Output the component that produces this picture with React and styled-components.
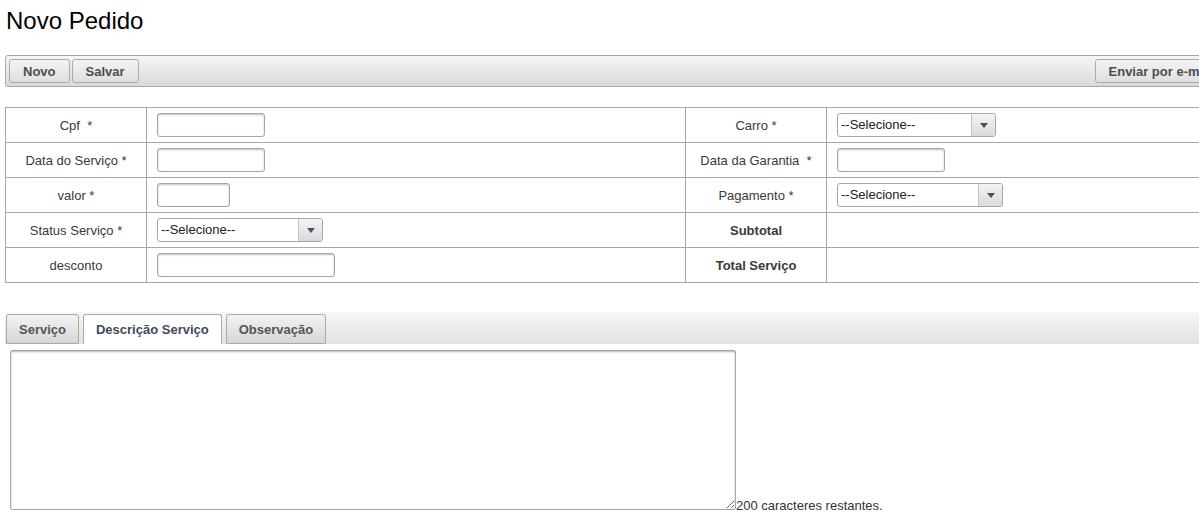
import React from "react";
import styled, { createGlobalStyle } from "styled-components";

const GlobalStyle = createGlobalStyle`
  html, body {
    margin: 0;
    padding: 0;
    overflow: hidden;
    background: #fff;
  }
  body {
    font-family: "Liberation Sans", Arial, sans-serif;
    font-size: 13px;
    color: #333;
  }
`;

const Page = styled.div`
  width: 1227px;
  padding: 7px 0 0 5px;
`;

const Title = styled.h1`
  margin: 0 0 20px 1px;
  font-size: 24px;
  line-height: 28px;
  font-weight: normal;
  color: #000;
`;

const Toolbar = styled.div`
  display: flex;
  gap: 2px;
  padding: 3px;
  border: 1px solid #a8a8a8;
  border-radius: 3px;
  background: linear-gradient(to bottom, #f6f6f6, #d9d9d9);
`;

const ToolButton = styled.button`
  height: 24px;
  padding: 0 13px;
  margin-left: ${(props) => (props.right ? "auto" : "0")};
  border: 1px solid #ababab;
  border-radius: 3px;
  background: linear-gradient(to bottom, #f4f4f4, #dedede);
  font-family: inherit;
  font-size: 13px;
  font-weight: bold;
  color: #4d4d4d;
  cursor: pointer;
`;

const FormTable = styled.table`
  width: 100%;
  margin-top: 20px;
  border-collapse: collapse;
  table-layout: fixed;
`;

const Cell = styled.td`
  height: 24px;
  padding: 5px 10px;
  border: 1px solid #a8a8a8;
  vertical-align: middle;
  text-align: ${(props) => (props.label ? "center" : "left")};
  font-weight: ${(props) => (props.bold ? "bold" : "normal")};
  color: #3a3a3a;
  white-space: nowrap;
`;

const TextInput = styled.input`
  display: block;
  box-sizing: border-box;
  width: ${(props) => props.w}px;
  height: 24px;
  padding: 2px 4px;
  border: 1px solid #a6a6a6;
  border-radius: 3px;
  box-shadow: inset 0 1px 2px rgba(0, 0, 0, 0.25);
  background: #fff;
  font-family: inherit;
  font-size: 13px;
`;

const Select = styled.div`
  display: flex;
  box-sizing: border-box;
  width: ${(props) => props.w}px;
  height: 24px;
  border: 1px solid #a6a6a6;
  border-radius: 3px;
  background: #fff;
  overflow: hidden;
  cursor: pointer;
`;

const SelectLabel = styled.span`
  flex: 1;
  padding-left: 3px;
  line-height: 22px;
  font-size: 13px;
  color: #222;
`;

const SelectTrigger = styled.span`
  display: flex;
  align-items: center;
  justify-content: center;
  width: 23px;
  border-left: 1px solid #c4c4c4;
  background: linear-gradient(to bottom, #f4f4f4, #dadada);
`;

const TabBar = styled.div`
  display: flex;
  gap: 4px;
  margin-top: 29px;
  padding: 2px 1px 0;
  height: 30px;
  background: linear-gradient(to bottom, #f6f6f6, #e2e2e2);
`;

const Tab = styled.div`
  box-sizing: border-box;
  height: 30px;
  padding: 1px 12px 0;
  line-height: 28px;
  border: 1px solid #aaa;
  border-bottom: ${(props) => (props.active ? "none" : "1px solid #aaa")};
  border-radius: 3px 3px 0 0;
  background: ${(props) =>
    props.active ? "#fff" : "linear-gradient(to bottom, #f3f3f3, #d6d6d6)"};
  font-size: 13px;
  font-weight: bold;
  color: ${(props) => (props.active ? "#3b4b5b" : "#555")};
  cursor: pointer;
`;

const TabPanel = styled.div`
  padding: 6px 0 0 5px;
`;

const Description = styled.textarea`
  box-sizing: border-box;
  width: 726px;
  height: 160px;
  margin: 0;
  padding: 3px;
  border: 1px solid #a6a6a6;
  border-radius: 2px;
  box-shadow: inset 0 1px 2px rgba(0, 0, 0, 0.3);
  font-family: inherit;
  font-size: 13px;
  vertical-align: baseline;
`;

const Counter = styled.span`
  font-size: 13px;
  color: #333;
`;

const Arrow = () => (
  <svg width="8" height="5" viewBox="0 0 8 5">
    <polygon points="0,0 8,0 4,5" fill="#3d5266" />
  </svg>
);

const Dropdown = ({ w }) => (
  <Select w={w}>
    <SelectLabel>--Selecione--</SelectLabel>
    <SelectTrigger>
      <Arrow />
    </SelectTrigger>
  </Select>
);

function App() {
  return (
    <Page>
      <GlobalStyle />
      <Title>Novo Pedido</Title>

      <Toolbar>
        <ToolButton>Novo</ToolButton>
        <ToolButton>Salvar</ToolButton>
        <ToolButton right>Enviar por e-mail</ToolButton>
      </Toolbar>

      <FormTable>
        <colgroup>
          <col style={{ width: 141 }} />
          <col style={{ width: 539 }} />
          <col style={{ width: 141 }} />
          <col />
        </colgroup>
        <tbody>
          <tr>
            <Cell label>Cpf&nbsp; *</Cell>
            <Cell>
              <TextInput w={108} />
            </Cell>
            <Cell label>Carro *</Cell>
            <Cell>
              <Dropdown w={159} />
            </Cell>
          </tr>
          <tr>
            <Cell label>Data do Serviço *</Cell>
            <Cell>
              <TextInput w={108} />
            </Cell>
            <Cell label>Data da Garantia&nbsp; *</Cell>
            <Cell>
              <TextInput w={108} />
            </Cell>
          </tr>
          <tr>
            <Cell label>valor *</Cell>
            <Cell>
              <TextInput w={73} />
            </Cell>
            <Cell label>Pagamento *</Cell>
            <Cell>
              <Dropdown w={166} />
            </Cell>
          </tr>
          <tr>
            <Cell label>Status Serviço *</Cell>
            <Cell>
              <Dropdown w={166} />
            </Cell>
            <Cell label bold>
              Subtotal
            </Cell>
            <Cell />
          </tr>
          <tr>
            <Cell label>desconto</Cell>
            <Cell>
              <TextInput w={178} />
            </Cell>
            <Cell label bold>
              Total Serviço
            </Cell>
            <Cell />
          </tr>
        </tbody>
      </FormTable>

      <TabBar>
        <Tab>Serviço</Tab>
        <Tab active>Descrição Serviço</Tab>
        <Tab>Observação</Tab>
      </TabBar>
      <TabPanel>
        <Description />
        <Counter>200 caracteres restantes.</Counter>
      </TabPanel>
    </Page>
  );
}

export default App;
